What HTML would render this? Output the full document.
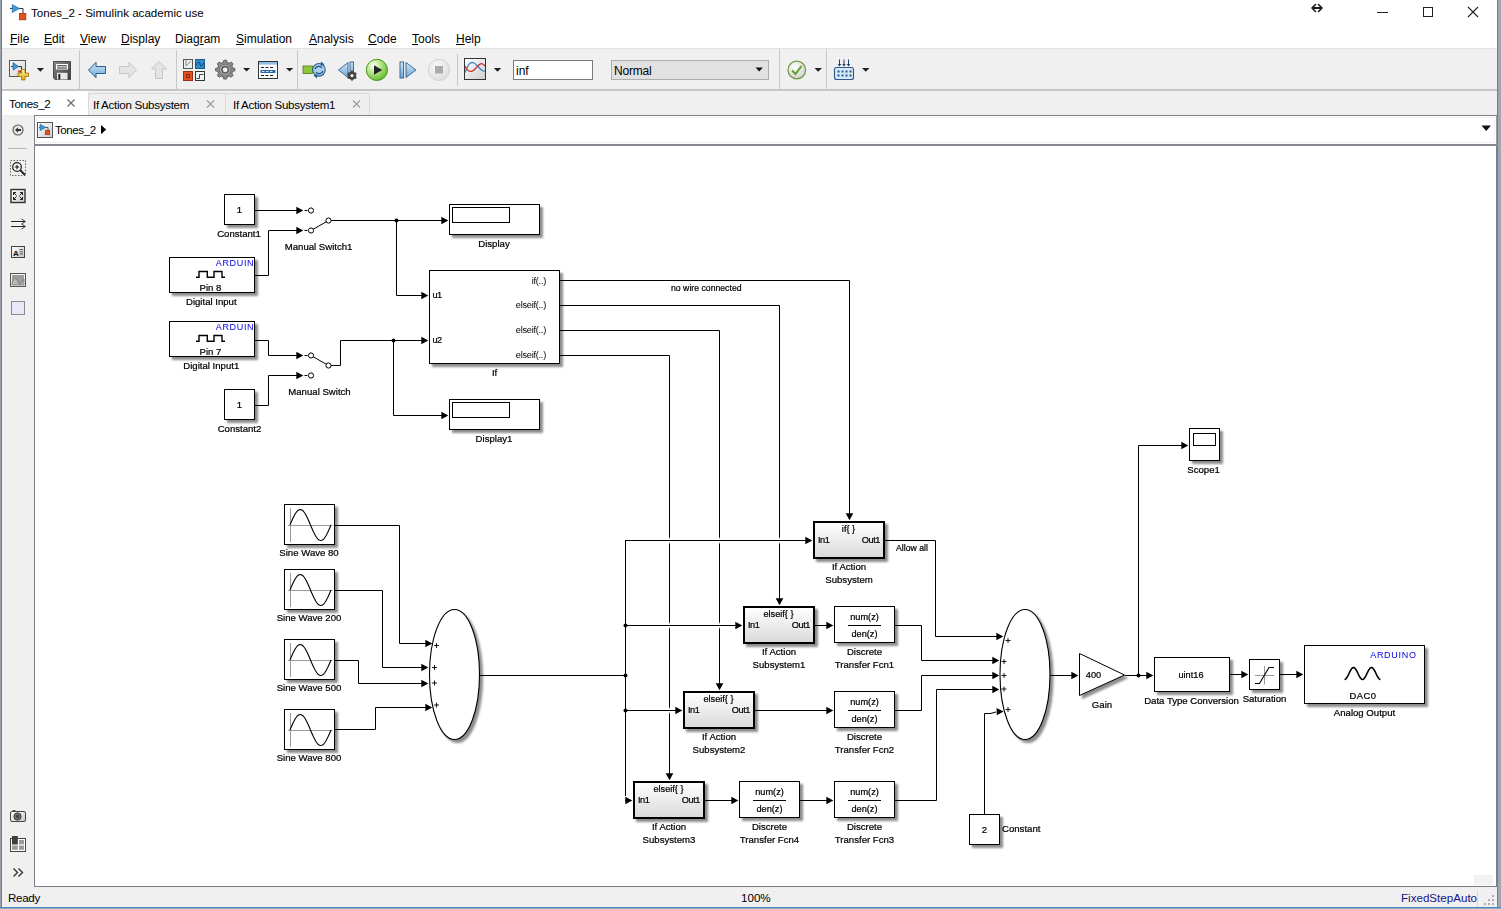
<!DOCTYPE html>
<html><head><meta charset="utf-8">
<style>
*{box-sizing:border-box}
html,body{margin:0;padding:0}
body{width:1501px;height:909px;position:relative;overflow:hidden;background:#fff;font-family:"Liberation Sans",sans-serif;color:#000}
.a{position:absolute}
.ui{font-size:12px;white-space:nowrap;line-height:1}
.menu span{position:absolute;top:33px;font-size:12px;line-height:1}
.menu u{text-decoration:underline;text-underline-offset:1px;text-decoration-thickness:1px}
</style></head><body>
<!-- window border -->
<div class="a" style="left:0;top:0;width:1px;height:909px;background:#9aa0ab"></div>
<div class="a" style="left:1px;top:0;width:1px;height:908px;background:#3c8fc6"></div>
<div class="a" style="left:1497px;top:0;width:1px;height:908px;background:#3c8fc6"></div>
<div class="a" style="left:1498px;top:0;width:3px;height:909px;background:#a0a5b1"></div>
<div class="a" style="left:0;top:907px;width:1501px;height:1px;background:#3c8fc6"></div>
<div class="a" style="left:0;top:908px;width:1501px;height:1px;background:#a0a5b1"></div>

<!-- title -->
<svg class="a" style="left:9px;top:3px" width="18" height="18" viewBox="0 0 18 18">
  <path d="M1 5.5H14V10.5" fill="none" stroke="#333" stroke-width="1"/>
  <path d="M3.2 1.6L10.6 5.5L3.2 9.6Z" fill="#3d9ad6" stroke="#1e5f9a" stroke-width="0.6"/>
  <rect x="10.3" y="10.3" width="6.6" height="6.6" fill="#e0541c" stroke="#8a2b08" stroke-width="0.6"/>
</svg>
<div class="a ui" style="left:31px;top:7px;font-size:11.6px">Tones_2 - Simulink academic use</div>
<!-- window controls -->
<svg class="a" style="left:1310px;top:3px" width="14" height="10"><path d="M3 5H11" stroke="#1a1a1a" stroke-width="2"/><path d="M2 5L5.5 1.5M2 5L5.5 8.5M12 5L8.5 1.5M12 5L8.5 8.5" stroke="#1a1a1a" stroke-width="1.6" stroke-linecap="round"/></svg>
<div class="a" style="left:1377px;top:12px;width:11px;height:1px;background:#222"></div>
<div class="a" style="left:1423px;top:7px;width:10px;height:10px;border:1px solid #222"></div>
<svg class="a" style="left:1467px;top:6px" width="12" height="12"><path d="M1 1L11 11M11 1L1 11" stroke="#222" stroke-width="1.1"/></svg>

<!-- menu -->
<div class="menu">
<span style="left:10px"><u>F</u>ile</span>
<span style="left:44px"><u>E</u>dit</span>
<span style="left:80px"><u>V</u>iew</span>
<span style="left:121px"><u>D</u>isplay</span>
<span style="left:175px">Diag<u>r</u>am</span>
<span style="left:236px"><u>S</u>imulation</span>
<span style="left:309px"><u>A</u>nalysis</span>
<span style="left:368px"><u>C</u>ode</span>
<span style="left:412px"><u>T</u>ools</span>
<span style="left:456px"><u>H</u>elp</span>
</div>

<!-- toolbar -->
<div class="a" style="left:2px;top:48px;width:1495px;height:42px;background:#f0f0f0;border-top:1px solid #e3e3e3;border-bottom:1px solid #c4c4c4"></div>
<!--TB-->
<svg class="a" style="left:0;top:48px" width="900" height="42" viewBox="0 48 900 42">
<defs>
<linearGradient id="pg" x1="0" y1="0" x2="1" y2="1"><stop offset="0" stop-color="#fff"/><stop offset="1" stop-color="#cfcfcf"/></linearGradient>
<linearGradient id="yl" x1="0" y1="0" x2="0" y2="1"><stop offset="0" stop-color="#fff6b0"/><stop offset="1" stop-color="#e0a800"/></linearGradient>
<linearGradient id="bl" x1="0" y1="0" x2="0" y2="1"><stop offset="0" stop-color="#cfe6f7"/><stop offset="1" stop-color="#6fa9d8"/></linearGradient>
<linearGradient id="fl" x1="0" y1="0" x2="1" y2="1"><stop offset="0" stop-color="#8a8a8a"/><stop offset="1" stop-color="#3a3a3a"/></linearGradient>
<radialGradient id="gn" cx="0.35" cy="0.3" r="0.75"><stop offset="0" stop-color="#ffffff"/><stop offset="0.45" stop-color="#b8e68a"/><stop offset="1" stop-color="#5fb82a"/></radialGradient>
<radialGradient id="gy" cx="0.4" cy="0.35" r="0.7"><stop offset="0" stop-color="#fafafa"/><stop offset="1" stop-color="#dcdcdc"/></radialGradient>
<radialGradient id="ck" cx="0.4" cy="0.35" r="0.7"><stop offset="0" stop-color="#ffffff"/><stop offset="1" stop-color="#d0d0d0"/></radialGradient>
<linearGradient id="gear" x1="0" y1="0" x2="0" y2="1"><stop offset="0" stop-color="#9a9a9a"/><stop offset="1" stop-color="#4a4a4a"/></linearGradient>
</defs>
<!-- new model -->
<rect x="9.5" y="60.5" width="16" height="16" fill="url(#pg)" stroke="#555" stroke-width="1"/>
<path d="M11 66.5H21.5V70" fill="none" stroke="#333" stroke-width="1"/>
<path d="M13 62.5L18.5 66.5L13 70.2Z" fill="#3d9ad6" stroke="#1e5f9a" stroke-width="0.7"/>
<rect x="18.2" y="70.5" width="2.8" height="2" fill="#d02a10"/>
<path d="M21.5 69.5h3.5v3.5h3.5v3.5h-3.5v3.5h-3.5v-3.5h-3.5v-3.5h3.5z" fill="url(#yl)" stroke="#a07000" stroke-width="0.8"/>
<path d="M36.8 68H44L40.4 71.8Z" fill="#222"/>
<!-- save -->
<path d="M53.5 61.5H70.5V79.5H55L53.5 78Z" fill="url(#fl)" stroke="#333" stroke-width="0.8"/>
<rect x="56" y="64" width="12" height="5.5" fill="#fff"/>
<path d="M57 65.8H67M57 68H67" stroke="#111" stroke-width="0.9"/>
<rect x="57" y="72.8" width="10.5" height="6.7" fill="#e6e6e6"/>
<rect x="58.3" y="74" width="2" height="5.5" fill="#222"/>
<!-- separators -->
<path d="M79.5 50V90M176.5 50V90M297.5 50V90M457.5 54V86M779.5 49V90M826.5 49V90" stroke="#c8c8c8" stroke-width="1"/>
<!-- back -->
<path d="M88.5 70L96 62.3V66.5H105.5V73.5H96V77.7Z" fill="url(#bl)" stroke="#2b5f8f" stroke-width="1"/>
<!-- fwd / up (disabled) -->
<path d="M136.5 70L129 62.3V66.5H119.5V73.5H129V77.7Z" fill="#e4e4e4" stroke="#c6c6c6" stroke-width="1"/>
<path d="M159 61.5L166.5 69H162.5V78.5H155.5V69H151.5Z" fill="#e4e4e4" stroke="#c6c6c6" stroke-width="1"/>
<!-- library browser -->
<rect x="183.5" y="59.5" width="9" height="9" fill="#e8eef4" stroke="#555" stroke-width="1"/>
<path d="M186 60V66L191 61" fill="none" stroke="#777" stroke-width="0.8"/>
<rect x="195.5" y="59.5" width="9" height="9" fill="#2f8fd0" stroke="#1a5a8a" stroke-width="1"/>
<path d="M196.5 65C198 61 199.5 61 200 64S202 67 203.5 63" fill="none" stroke="#0b2f55" stroke-width="0.9"/>
<rect x="183.5" y="71.5" width="9" height="9" fill="#e0521e" stroke="#9a3010" stroke-width="1"/>
<rect x="186.5" y="74.5" width="3" height="3" fill="none" stroke="#7a2008" stroke-width="0.9"/>
<rect x="195.5" y="71.5" width="9" height="9" fill="#eef2f6" stroke="#333" stroke-width="1"/>
<path d="M196.5 78.5H199.5V74.5H203.5" fill="none" stroke="#333" stroke-width="0.9"/>
<!-- gear -->
<g transform="translate(225.2 69.8)">
<g fill="#8c8c8c" stroke="#3a3a3a" stroke-width="0.8">
<path d="M-1.6 -9.6H1.6L2.2 -7.2L4.6 -6.2L6.8 -7.6L9 -5.4L7.6 -3.2L8.6 -0.8L11 -0.2V2.4L8.6 3L7.6 5.4L9 7.6L6.8 9.8L4.6 8.4L2.2 9.4L1.6 11.8H-1.6L-2.2 9.4L-4.6 8.4L-6.8 9.8L-9 7.6L-7.6 5.4L-8.6 3L-11 2.4V-0.2L-8.6 -0.8L-7.6 -3.2L-9 -5.4L-6.8 -7.6L-4.6 -6.2L-2.2 -7.2Z" transform="translate(0 -1.1) scale(0.88)"/>
</g>
<circle r="5.6" fill="#b4b4b4" stroke="#5a5a5a" stroke-width="0.7"/>
<circle r="4" fill="#5e5e5e"/>
<circle r="2.4" fill="#f2f2f2"/>
</g>
<path d="M243 68H250.2L246.6 71.6Z" fill="#222"/>
<!-- model explorer -->
<rect x="258.5" y="61.5" width="19" height="17" fill="#fff" stroke="#333" stroke-width="1"/>
<rect x="259" y="62" width="18" height="2.6" fill="#8fbde3"/>
<path d="M261 67.5h3M265.5 67.5h3M270 67.5h3M261 75.5h3M265.5 75.5h3M270 75.5h3" stroke="#222" stroke-width="1"/>
<rect x="260.5" y="70" width="15" height="3" fill="#2c64a8"/>
<path d="M262 71.5h2.5M266 71.5h2.5M270 71.5h2.5" stroke="#cfe4f7" stroke-width="1"/>
<path d="M286 68H293.2L289.6 71.6Z" fill="#222"/>
<!-- connect -->
<rect x="303" y="66" width="9.5" height="7.5" fill="#8cc63e" stroke="#4a7a1a" stroke-width="0.8"/>
<circle cx="319" cy="69.8" r="6.3" fill="#a9cdea" stroke="#2b5f8f" stroke-width="1.1"/>
<path d="M315 69C316 66 320 65.5 322 68M323 71C322 74 318 74.5 316 72" fill="none" stroke="#1d4f80" stroke-width="1.2"/>
<path d="M321 61.5L324.5 64.5L320.5 66Z M317 78.5L313.5 75.5L317.5 74Z" fill="#2b5f8f"/>
<!-- step back -->
<path d="M348 62.5V77.5L338.5 70Z" fill="url(#bl)" stroke="#2b5f8f" stroke-width="0.9"/>
<rect x="350" y="62" width="3.5" height="13" fill="url(#bl)" stroke="#2b5f8f" stroke-width="0.9"/>
<g transform="translate(352 75.6)"><circle r="4.2" fill="#444"/><g fill="#444"><rect x="-0.9" y="-5" width="1.8" height="10"/><rect x="-0.9" y="-5" width="1.8" height="10" transform="rotate(60)"/><rect x="-0.9" y="-5" width="1.8" height="10" transform="rotate(120)"/></g><circle r="1.6" fill="#eee"/></g>
<!-- play -->
<circle cx="376.9" cy="69.9" r="10.6" fill="url(#gn)" stroke="#4a9a20" stroke-width="1"/>
<path d="M374 65.3V74.7L382.2 70Z" fill="#222"/>
<!-- step fwd -->
<rect x="400" y="62" width="3.6" height="16" fill="url(#bl)" stroke="#2b5f8f" stroke-width="0.9"/>
<path d="M406 62.5V77.5L416 70Z" fill="url(#bl)" stroke="#2b5f8f" stroke-width="0.9"/>
<!-- stop -->
<circle cx="439" cy="69.9" r="10.7" fill="url(#gy)" stroke="#d4d4d4" stroke-width="1"/>
<rect x="435" y="66" width="8" height="7.6" fill="#ababab"/>
<!-- scope graph -->
<rect x="464.5" y="58.5" width="21" height="21" fill="url(#pg)" stroke="#333" stroke-width="1"/>
<path d="M465 72.5C468 65 470 61 474 63S481 72 485 71" fill="none" stroke="#3a86c8" stroke-width="1.3"/>
<path d="M465 66C467 71 470 73 474 70S480 60 485 66" fill="none" stroke="#c0302a" stroke-width="1.3"/>
<path d="M493.8 68H501.2L497.5 71.8Z" fill="#222"/>
<!-- check -->
<circle cx="796.8" cy="70" r="8.8" fill="url(#ck)" stroke="#6a9a3a" stroke-width="1.2"/>
<path d="M792 70.5L795.5 74L801.5 66" fill="none" stroke="#5aa02a" stroke-width="2"/>
<path d="M814.5 68H822L818.2 71.8Z" fill="#222"/>
<!-- grid -->
<rect x="834.5" y="67.5" width="19" height="12" rx="2" fill="#d8e9f8" stroke="#2c5a8e" stroke-width="1.1"/>
<g fill="#2c5a8e"><rect x="837.5" y="70.5" width="2" height="2"/><rect x="841.5" y="70.5" width="2" height="2"/><rect x="845.5" y="70.5" width="2" height="2"/><rect x="849.5" y="70.5" width="2" height="2"/><rect x="837.5" y="74.5" width="2" height="2"/><rect x="841.5" y="74.5" width="2" height="2"/><rect x="845.5" y="74.5" width="2" height="2"/><rect x="849.5" y="74.5" width="2" height="2"/></g>
<path d="M839.5 59.5V65M844 59.5V65M848.5 59.5V65" stroke="#1d3f6a" stroke-width="1"/>
<path d="M837.7 64H841.3L839.5 66.5ZM842.2 64H845.8L844 66.5ZM846.7 64H850.3L848.5 66.5Z" fill="#1d3f6a"/>
<path d="M862 68H869.5L865.8 71.8Z" fill="#222"/>
</svg>
<div class="a" style="left:513px;top:60px;width:80px;height:20px;background:#fff;border:1px solid #7a7a7a"></div>
<div class="a ui" style="left:516px;top:65px;font-size:12px">inf</div>
<div class="a" style="left:611px;top:60px;width:158px;height:20px;background:#e1e1e1;border:1px solid #adadad"></div>
<div class="a ui" style="left:614px;top:65px;font-size:12px;letter-spacing:-0.2px">Normal</div>
<svg class="a" style="left:755px;top:67px" width="9" height="6"><path d="M0.5 0.5H8L4.2 4.5Z" fill="#111"/></svg>
<!--/TB-->

<!--CH2-->
<!-- tab bar -->
<div class="a" style="left:2px;top:90px;width:1495px;height:25px;background:#f0f0f0;border-top:1px solid #c8c8c8"></div>
<div class="a" style="left:2px;top:91px;width:86px;height:24px;background:#fff"></div>
<div class="a" style="left:88px;top:93px;width:138px;height:22px;background:#efefef;border-top:1px solid #dadada;border-left:1px solid #dadada;border-right:1px solid #dadada"></div>
<div class="a" style="left:226px;top:93px;width:144px;height:22px;background:#efefef;border-top:1px solid #dadada;border-right:1px solid #dadada"></div>
<div class="a ui" style="left:9px;top:98px;font-size:11.6px;letter-spacing:-0.35px">Tones_2</div>
<div class="a ui" style="left:93px;top:99px;font-size:11.6px;letter-spacing:-0.3px">If Action Subsystem</div>
<div class="a ui" style="left:233px;top:99px;font-size:11.6px;letter-spacing:-0.3px">If Action Subsystem1</div>
<svg class="a" style="left:0;top:90px" width="380" height="25" viewBox="0 90 380 25">
<path d="M67.5 99.5L74.5 106.5M74.5 99.5L67.5 106.5" stroke="#6a6a6a" stroke-width="1.2"/>
<path d="M207 100.5L214 107.5M214 100.5L207 107.5" stroke="#9a9a9a" stroke-width="1.1"/>
<path d="M353 100.5L360 107.5M360 100.5L353 107.5" stroke="#9a9a9a" stroke-width="1.1"/>
</svg>

<!-- left palette -->
<div class="a" style="left:2px;top:115px;width:32px;height:772px;background:#f0f0f0"></div>
<svg class="a" style="left:0;top:115px" width="34" height="772" viewBox="0 115 34 772">
<defs><linearGradient id="pl" x1="0" y1="0" x2="1" y2="1"><stop offset="0" stop-color="#fff"/><stop offset="1" stop-color="#c8c8c8"/></linearGradient></defs>
<circle cx="18" cy="130" r="5" fill="#e8e8e8" stroke="#555" stroke-width="1.1"/>
<path d="M15 130L18 127.3V129H21V131H18V132.7Z" fill="#333"/>
<path d="M8 148.5H27" stroke="#b8b8b8" stroke-width="1"/>
<rect x="10.5" y="160.5" width="15" height="15" fill="none" stroke="#666" stroke-width="1" stroke-dasharray="1.5 1.5"/>
<circle cx="17" cy="167" r="4.3" fill="#fff" stroke="#222" stroke-width="1.3"/>
<path d="M14.8 167H19.2M17 164.8V169.2" stroke="#111" stroke-width="1.1"/>
<path d="M20 170L25 175" stroke="#222" stroke-width="1.8"/>
<rect x="11" y="189.5" width="14" height="13" fill="url(#pl)" stroke="#333" stroke-width="1.4"/>
<path d="M13.5 192.5L16.5 195.5M13.5 192.5V195M13.5 192.5H16M22.5 192.5L19.5 195.5M22.5 192.5V195M22.5 192.5H20M13.5 199.5L16.5 196.5M13.5 199.5V197M13.5 199.5H16M22.5 199.5L19.5 196.5M22.5 199.5V197M22.5 199.5H20" stroke="#222" stroke-width="1" fill="none"/>
<path d="M11 221.5H25M11 226.5H25" stroke="#222" stroke-width="1"/>
<path d="M21.5 219L25.5 221.5L21.5 224M21.5 224L25.5 226.5L21.5 229" fill="none" stroke="#444" stroke-width="1"/>
<rect x="11.5" y="246.5" width="13" height="11" fill="url(#pl)" stroke="#444" stroke-width="1"/>
<text x="13" y="255.5" font-size="8" font-weight="bold" font-family="Liberation Sans" fill="#111">A</text>
<path d="M19.5 249.5H23M19.5 251.8H23M19.5 254H23" stroke="#333" stroke-width="0.8"/>
<rect x="10.5" y="273.5" width="15" height="13" fill="#f4f4f4" stroke="#555" stroke-width="1"/>
<rect x="12" y="275" width="12" height="10" fill="#9c9c9c"/>
<path d="M12 283C14 277 16 277 18 282S22 282 24 279V285H12Z" fill="#b9b9b9" stroke="#6a6a6a" stroke-width="0.7"/>
<rect x="11.5" y="301.5" width="13" height="13" fill="#e8e8f8" stroke="#8a8a8a" stroke-width="1"/>
<!-- camera -->
<rect x="10.5" y="811.5" width="15" height="10" rx="1.5" fill="url(#pl)" stroke="#444" stroke-width="1"/>
<rect x="12.5" y="810" width="3" height="1.5" fill="#555"/>
<circle cx="17.5" cy="816.5" r="3.6" fill="#777" stroke="#333" stroke-width="1"/>
<circle cx="17.5" cy="816.5" r="1.8" fill="#444"/>
<!-- layout -->
<rect x="10.5" y="838.5" width="15" height="13" fill="#fff" stroke="#444" stroke-width="1"/>
<rect x="12" y="836" width="5.8" height="8.5" fill="#3e3e3e"/>
<rect x="19" y="840" width="5" height="4.3" fill="#9a9a9a"/>
<rect x="12" y="845.5" width="5.8" height="4.3" fill="#9a9a9a"/>
<rect x="19" y="845.5" width="5" height="4.3" fill="#9a9a9a"/>
<path d="M13.5 868.5L17.5 872.5L13.5 876.5M18.5 868.5L22.5 872.5L18.5 876.5" fill="none" stroke="#333" stroke-width="1.4"/>
</svg>

<!-- breadcrumb -->
<div class="a" style="left:34px;top:115px;width:1463px;height:31px;background:#fff;border-top:1px solid #7d8088;border-bottom:2px solid #858890;border-left:1px solid #7d8088;border-right:1px solid #9a9ca2"></div>
<div class="a" style="left:36px;top:117px;width:1459px;height:26px;border:1px solid #f0f0f0"></div>
<svg class="a" style="left:34px;top:115px" width="80" height="30" viewBox="34 115 80 30">
<defs><linearGradient id="bc" x1="0" y1="0" x2="1" y2="1"><stop offset="0" stop-color="#fff"/><stop offset="1" stop-color="#cfcfcf"/></linearGradient></defs>
<rect x="37.5" y="122.5" width="15" height="15" fill="url(#bc)" stroke="#555" stroke-width="1"/>
<path d="M39 127.5H48V131" fill="none" stroke="#333" stroke-width="0.8"/>
<path d="M40 124.2L46 127.4L40 130.6Z" fill="#3d9ad6" stroke="#1e5f9a" stroke-width="0.6"/>
<rect x="45.2" y="130.2" width="4.6" height="4.6" fill="#e0541c" stroke="#8a2b08" stroke-width="0.5"/>
<path d="M101 125V134.2L106.2 129.6Z" fill="#000"/>
</svg>
<div class="a ui" style="left:55px;top:124px;font-size:11.6px;letter-spacing:-0.45px">Tones_2</div>
<svg class="a" style="left:1481px;top:125px" width="11" height="7"><path d="M0.5 0.5H10L5.2 6Z" fill="#111"/></svg>

<!-- canvas -->
<div class="a" style="left:34px;top:146px;width:1463px;height:741px;background:#fff;border-left:1px solid #7a7e87;border-right:1px solid #7a7e87;border-bottom:1px solid #7a7e87"></div>
<div class="a" style="left:1474px;top:875px;width:19px;height:10px;background:#f2f2f2"></div>

<!-- status bar -->
<div class="a" style="left:2px;top:887px;width:1495px;height:20px;background:#f0f0f0"></div>
<div class="a ui" style="left:8px;top:892px;font-size:11.6px;letter-spacing:-0.3px">Ready</div>
<div class="a ui" style="left:741px;top:892px;font-size:11.6px">100%</div>
<div class="a ui" style="left:1401px;top:892px;font-size:11.6px;color:#14148a">FixedStepAuto</div>
<div class="a" style="left:1477px;top:890px;width:1px;height:17px;background:#d8d8d8"></div>
<svg class="a" style="left:1484px;top:895px" width="12" height="12"><g fill="#b0b0b0"><rect x="8" y="8" width="2" height="2"/><rect x="4" y="8" width="2" height="2"/><rect x="8" y="4" width="2" height="2"/><rect x="0" y="8" width="2" height="2"/><rect x="4" y="4" width="2" height="2"/><rect x="8" y="0" width="2" height="2"/></g></svg>
<!--/CH2-->
<svg id="dg" class="a" style="left:0;top:0;will-change:transform" width="1501" height="909">
<defs>
<filter id="sh" x="-20%" y="-20%" width="150%" height="160%"><feGaussianBlur in="SourceAlpha" stdDeviation="1.3"/><feOffset dx="2.5" dy="3" result="o"/><feComponentTransfer><feFuncA type="linear" slope="0.45"/></feComponentTransfer><feMerge><feMergeNode/><feMergeNode in="SourceGraphic"/></feMerge></filter>
<linearGradient id="gr" x1="0" y1="0" x2="0" y2="1"><stop offset="0" stop-color="#ffffff"/><stop offset="1" stop-color="#d9d9d9"/></linearGradient>
</defs>
<g font-family="Liberation Sans, sans-serif" stroke-width="0">
<rect x="224.5" y="194.5" width="30" height="30" fill="#fff" stroke="#000" stroke-width="1" filter="url(#sh)" />
<text x="239.5" y="213" font-size="9.6" text-anchor="middle" fill="#000" stroke="#000" stroke-width="0.22" >1</text>
<text x="239" y="236.5" font-size="9.6" text-anchor="middle" fill="#000" stroke="#000" stroke-width="0.22" >Constant1</text>
<rect x="169.5" y="257.5" width="85" height="35" fill="#fff" stroke="#000" stroke-width="1" filter="url(#sh)" />
<text x="254.2" y="265.8" font-size="9" text-anchor="end" fill="#0000e0" stroke="#0000e0" stroke-width="0" letter-spacing="0.65">ARDUIN</text>
<path d="M196 277.3H199V271.5H207.3V277.3H214V271.5H222V277.3H225" fill="none" stroke="#000" stroke-width="1.4"/>
<text x="210.5" y="290.7" font-size="9.6" text-anchor="middle" fill="#000" stroke="#000" stroke-width="0.22" >Pin 8</text>
<text x="211.3" y="304.5" font-size="9.6" text-anchor="middle" fill="#000" stroke="#000" stroke-width="0.22" >Digital Input</text>
<rect x="169.5" y="321.5" width="85" height="35" fill="#fff" stroke="#000" stroke-width="1" filter="url(#sh)" />
<text x="254.2" y="329.8" font-size="9" text-anchor="end" fill="#0000e0" stroke="#0000e0" stroke-width="0" letter-spacing="0.65">ARDUIN</text>
<path d="M196 341.3H199V335.5H207.3V341.3H214V335.5H222V341.3H225" fill="none" stroke="#000" stroke-width="1.4"/>
<text x="210.5" y="354.7" font-size="9.6" text-anchor="middle" fill="#000" stroke="#000" stroke-width="0.22" >Pin 7</text>
<text x="211.3" y="368.5" font-size="9.6" text-anchor="middle" fill="#000" stroke="#000" stroke-width="0.22" >Digital Input1</text>
<rect x="224.5" y="389.5" width="30" height="30" fill="#fff" stroke="#000" stroke-width="1" filter="url(#sh)" />
<text x="239.5" y="408" font-size="9.6" text-anchor="middle" fill="#000" stroke="#000" stroke-width="0.22" >1</text>
<text x="239.5" y="431.6" font-size="9.6" text-anchor="middle" fill="#000" stroke="#000" stroke-width="0.22" >Constant2</text>
<path d="M304.5 210.5H307.5" stroke="#000" stroke-width="1"/>
<circle cx="311" cy="210.5" r="2.6" fill="#fff" stroke="#000" stroke-width="1"/>
<path d="M304.5 230.5H307.5" stroke="#000" stroke-width="1"/>
<circle cx="311" cy="230.5" r="2.6" fill="#fff" stroke="#000" stroke-width="1"/>
<circle cx="328.5" cy="220.5" r="2.6" fill="#fff" stroke="#000" stroke-width="1"/>
<path d="M313.26 229.21L326.24 221.79" stroke="#000" stroke-width="1"/>
<text x="318.6" y="249.6" font-size="9.6" text-anchor="middle" fill="#000" stroke="#000" stroke-width="0.22" >Manual Switch1</text>
<path d="M304.5 355.5H307.5" stroke="#000" stroke-width="1"/>
<circle cx="311" cy="355.5" r="2.6" fill="#fff" stroke="#000" stroke-width="1"/>
<path d="M304.5 375.5H307.5" stroke="#000" stroke-width="1"/>
<circle cx="311" cy="375.5" r="2.6" fill="#fff" stroke="#000" stroke-width="1"/>
<circle cx="328.5" cy="365.5" r="2.6" fill="#fff" stroke="#000" stroke-width="1"/>
<path d="M313.26 356.79L326.24 364.21" stroke="#000" stroke-width="1"/>
<text x="319.5" y="394.7" font-size="9.6" text-anchor="middle" fill="#000" stroke="#000" stroke-width="0.22" >Manual Switch</text>
<path d="M255.5 210.5 L298.5 210.5" fill="none" stroke="#000" stroke-width="1" stroke-linecap="square"/>
<path d="M303.3 210.5L296.3 206.7L296.3 214.3Z" fill="#000"/>
<path d="M255.5 275.5 L268.5 275.5 L268.5 230.5 L298.5 230.5" fill="none" stroke="#000" stroke-width="1" stroke-linecap="square"/>
<path d="M303.3 230.5L296.3 226.7L296.3 234.3Z" fill="#000"/>
<path d="M331.5 220.5 L396.5 220.5" fill="none" stroke="#000" stroke-width="1" stroke-linecap="square"/>
<path d="M396.5 220.5 L443.5 220.5" fill="none" stroke="#000" stroke-width="1" stroke-linecap="square"/>
<path d="M448.3 220.5L441.3 216.7L441.3 224.3Z" fill="#000"/>
<path d="M396.5 220.5 L396.5 295.5 L423.5 295.5" fill="none" stroke="#000" stroke-width="1" stroke-linecap="square"/>
<path d="M428.3 295.5L421.3 291.7L421.3 299.3Z" fill="#000"/>
<circle cx="396.5" cy="220.5" r="2" fill="#000"/>
<path d="M255.5 340.5 L268.5 340.5 L268.5 355.5 L298.5 355.5" fill="none" stroke="#000" stroke-width="1" stroke-linecap="square"/>
<path d="M303.3 355.5L296.3 351.7L296.3 359.3Z" fill="#000"/>
<path d="M255.5 405.5 L268.5 405.5 L268.5 375.5 L298.5 375.5" fill="none" stroke="#000" stroke-width="1" stroke-linecap="square"/>
<path d="M303.3 375.5L296.3 371.7L296.3 379.3Z" fill="#000"/>
<path d="M331.5 365.5 L340.5 365.5 L340.5 340.5 L393.5 340.5" fill="none" stroke="#000" stroke-width="1" stroke-linecap="square"/>
<path d="M393.5 340.5 L423.5 340.5" fill="none" stroke="#000" stroke-width="1" stroke-linecap="square"/>
<path d="M428.3 340.5L421.3 336.7L421.3 344.3Z" fill="#000"/>
<path d="M393.5 340.5 L393.5 415.5 L443.5 415.5" fill="none" stroke="#000" stroke-width="1" stroke-linecap="square"/>
<path d="M448.3 415.5L441.3 411.7L441.3 419.3Z" fill="#000"/>
<circle cx="393.5" cy="340.5" r="2" fill="#000"/>
<rect x="449.5" y="204.5" width="90" height="30" fill="#fff" stroke="#000" stroke-width="1" filter="url(#sh)" />
<rect x="452.5" y="207.5" width="57" height="15" fill="none" stroke="#000" stroke-width="1"/>
<text x="494" y="247" font-size="9.6" text-anchor="middle" fill="#000" stroke="#000" stroke-width="0.22" >Display</text>
<rect x="449.5" y="399.5" width="90" height="30" fill="#fff" stroke="#000" stroke-width="1" filter="url(#sh)" />
<rect x="452.5" y="402.5" width="57" height="15" fill="none" stroke="#000" stroke-width="1"/>
<text x="494" y="442" font-size="9.6" text-anchor="middle" fill="#000" stroke="#000" stroke-width="0.22" >Display1</text>
<rect x="429.5" y="270.5" width="130" height="93" fill="#fff" stroke="#000" stroke-width="1" filter="url(#sh)" />
<text x="432.5" y="297.8" font-size="9.2" text-anchor="start" fill="#000" stroke="#000" stroke-width="0.22" letter-spacing="-0.6">u1</text>
<text x="432.5" y="342.8" font-size="9.2" text-anchor="start" fill="#000" stroke="#000" stroke-width="0.22" letter-spacing="-0.6">u2</text>
<text x="546" y="283.6" font-size="9.2" text-anchor="end" fill="#000" stroke="#000" stroke-width="0" letter-spacing="-0.25">if(..)</text>
<text x="546" y="308.1" font-size="9.2" text-anchor="end" fill="#000" stroke="#000" stroke-width="0" letter-spacing="-0.25">elseif(..)</text>
<text x="546" y="333.1" font-size="9.2" text-anchor="end" fill="#000" stroke="#000" stroke-width="0" letter-spacing="-0.25">elseif(..)</text>
<text x="546" y="358.1" font-size="9.2" text-anchor="end" fill="#000" stroke="#000" stroke-width="0" letter-spacing="-0.25">elseif(..)</text>
<text x="494.6" y="375.5" font-size="9.6" text-anchor="middle" fill="#000" stroke="#000" stroke-width="0.22" >If</text>
<path d="M560.5 280.5 L849.5 280.5 L849.5 515.5" fill="none" stroke="#000" stroke-width="1" stroke-linecap="square"/>
<path d="M849.5 520.3L845.7 513.3L853.3 513.3Z" fill="#000"/>
<path d="M560.5 305.5 L779.5 305.5 L779.5 600.5" fill="none" stroke="#000" stroke-width="1" stroke-linecap="square"/>
<path d="M779.5 605.3L775.7 598.3L783.3 598.3Z" fill="#000"/>
<path d="M560.5 330.5 L719.5 330.5 L719.5 685.5" fill="none" stroke="#000" stroke-width="1" stroke-linecap="square"/>
<path d="M719.5 690.3L715.7 683.3L723.3 683.3Z" fill="#000"/>
<path d="M560.5 355.5 L669.5 355.5 L669.5 775.5" fill="none" stroke="#000" stroke-width="1" stroke-linecap="square"/>
<path d="M669.5 780.3L665.7 773.3L673.3 773.3Z" fill="#000"/>
<text x="706.3" y="290.8" font-size="8.7" text-anchor="middle" fill="#000" stroke="#000" stroke-width="0.22" >no wire connected</text>
<rect x="284.5" y="504.5" width="50" height="40" fill="#fff" stroke="#000" stroke-width="1" filter="url(#sh)" />
<path d="M288 525.5H332.5M290.5 508V542" stroke="#9a9a9a" stroke-width="1"/>
<path d="M290.00 525.00 L291.02 522.58 L292.05 520.21 L293.07 517.96 L294.10 515.89 L295.12 514.04 L296.15 512.46 L297.18 511.19 L298.20 510.26 L299.23 509.69 L300.25 509.50 L301.27 509.69 L302.30 510.26 L303.32 511.19 L304.35 512.46 L305.38 514.04 L306.40 515.89 L307.43 517.96 L308.45 520.21 L309.48 522.58 L310.50 525.00 L311.52 527.42 L312.55 529.79 L313.57 532.04 L314.60 534.11 L315.62 535.96 L316.65 537.54 L317.68 538.81 L318.70 539.74 L319.73 540.31 L320.75 540.50 L321.77 540.31 L322.80 539.74 L323.82 538.81 L324.85 537.54 L325.88 535.96 L326.90 534.11 L327.93 532.04 L328.95 529.79 L329.98 527.42 L331.00 525.00" fill="none" stroke="#000" stroke-width="1.1"/>
<text x="309" y="556" font-size="9.6" text-anchor="middle" fill="#000" stroke="#000" stroke-width="0.22" >Sine Wave 80</text>
<rect x="284.5" y="569.5" width="50" height="40" fill="#fff" stroke="#000" stroke-width="1" filter="url(#sh)" />
<path d="M288 590.5H332.5M290.5 573V607" stroke="#9a9a9a" stroke-width="1"/>
<path d="M290.00 590.00 L291.02 587.58 L292.05 585.21 L293.07 582.96 L294.10 580.89 L295.12 579.04 L296.15 577.46 L297.18 576.19 L298.20 575.26 L299.23 574.69 L300.25 574.50 L301.27 574.69 L302.30 575.26 L303.32 576.19 L304.35 577.46 L305.38 579.04 L306.40 580.89 L307.43 582.96 L308.45 585.21 L309.48 587.58 L310.50 590.00 L311.52 592.42 L312.55 594.79 L313.57 597.04 L314.60 599.11 L315.62 600.96 L316.65 602.54 L317.68 603.81 L318.70 604.74 L319.73 605.31 L320.75 605.50 L321.77 605.31 L322.80 604.74 L323.82 603.81 L324.85 602.54 L325.88 600.96 L326.90 599.11 L327.93 597.04 L328.95 594.79 L329.98 592.42 L331.00 590.00" fill="none" stroke="#000" stroke-width="1.1"/>
<text x="309" y="621" font-size="9.6" text-anchor="middle" fill="#000" stroke="#000" stroke-width="0.22" >Sine Wave 200</text>
<rect x="284.5" y="639.5" width="50" height="40" fill="#fff" stroke="#000" stroke-width="1" filter="url(#sh)" />
<path d="M288 660.5H332.5M290.5 643V677" stroke="#9a9a9a" stroke-width="1"/>
<path d="M290.00 660.00 L291.02 657.58 L292.05 655.21 L293.07 652.96 L294.10 650.89 L295.12 649.04 L296.15 647.46 L297.18 646.19 L298.20 645.26 L299.23 644.69 L300.25 644.50 L301.27 644.69 L302.30 645.26 L303.32 646.19 L304.35 647.46 L305.38 649.04 L306.40 650.89 L307.43 652.96 L308.45 655.21 L309.48 657.58 L310.50 660.00 L311.52 662.42 L312.55 664.79 L313.57 667.04 L314.60 669.11 L315.62 670.96 L316.65 672.54 L317.68 673.81 L318.70 674.74 L319.73 675.31 L320.75 675.50 L321.77 675.31 L322.80 674.74 L323.82 673.81 L324.85 672.54 L325.88 670.96 L326.90 669.11 L327.93 667.04 L328.95 664.79 L329.98 662.42 L331.00 660.00" fill="none" stroke="#000" stroke-width="1.1"/>
<text x="309" y="691" font-size="9.6" text-anchor="middle" fill="#000" stroke="#000" stroke-width="0.22" >Sine Wave 500</text>
<rect x="284.5" y="709.5" width="50" height="40" fill="#fff" stroke="#000" stroke-width="1" filter="url(#sh)" />
<path d="M288 730.5H332.5M290.5 713V747" stroke="#9a9a9a" stroke-width="1"/>
<path d="M290.00 730.00 L291.02 727.58 L292.05 725.21 L293.07 722.96 L294.10 720.89 L295.12 719.04 L296.15 717.46 L297.18 716.19 L298.20 715.26 L299.23 714.69 L300.25 714.50 L301.27 714.69 L302.30 715.26 L303.32 716.19 L304.35 717.46 L305.38 719.04 L306.40 720.89 L307.43 722.96 L308.45 725.21 L309.48 727.58 L310.50 730.00 L311.52 732.42 L312.55 734.79 L313.57 737.04 L314.60 739.11 L315.62 740.96 L316.65 742.54 L317.68 743.81 L318.70 744.74 L319.73 745.31 L320.75 745.50 L321.77 745.31 L322.80 744.74 L323.82 743.81 L324.85 742.54 L325.88 740.96 L326.90 739.11 L327.93 737.04 L328.95 734.79 L329.98 732.42 L331.00 730.00" fill="none" stroke="#000" stroke-width="1.1"/>
<text x="309" y="761" font-size="9.6" text-anchor="middle" fill="#000" stroke="#000" stroke-width="0.22" >Sine Wave 800</text>
<path d="M335.5 525.5 L399.5 525.5 L399.5 643.5 L427.5 643.5" fill="none" stroke="#000" stroke-width="1" stroke-linecap="square"/>
<path d="M432.3 643.5L425.3 639.7L425.3 647.3Z" fill="#000"/>
<path d="M335.5 590.5 L382.5 590.5 L382.5 667.5 L423.5 667.5" fill="none" stroke="#000" stroke-width="1" stroke-linecap="square"/>
<path d="M428.3 667.5L421.3 663.7L421.3 671.3Z" fill="#000"/>
<path d="M335.5 660.5 L358.5 660.5 L358.5 683.5 L423.5 683.5" fill="none" stroke="#000" stroke-width="1" stroke-linecap="square"/>
<path d="M428.3 683.5L421.3 679.7L421.3 687.3Z" fill="#000"/>
<path d="M335.5 729.5 L375.5 729.5 L375.5 707.5 L427.5 707.5" fill="none" stroke="#000" stroke-width="1" stroke-linecap="square"/>
<path d="M432.3 707.5L425.3 703.7L425.3 711.3Z" fill="#000"/>
<ellipse cx="454.5" cy="674.5" rx="25" ry="65" fill="#fff" stroke="#000" stroke-width="1.1" filter="url(#sh)"/>
<path d="M434.0 645.5H439.0M436.5 643.0V648.0" stroke="#000" stroke-width="0.9"/>
<path d="M432.0 667.5H437.0M434.5 665.0V670.0" stroke="#000" stroke-width="0.9"/>
<path d="M432.0 683H437.0M434.5 680.5V685.5" stroke="#000" stroke-width="0.9"/>
<path d="M434.0 705H439.0M436.5 702.5V707.5" stroke="#000" stroke-width="0.9"/>
<path d="M480.5 675.5 L625.5 675.5" fill="none" stroke="#000" stroke-width="1" stroke-linecap="square"/>
<path d="M625.5 540.5 L625.5 795.5" fill="none" stroke="#000" stroke-width="1" stroke-linecap="square"/>
<circle cx="625.5" cy="675.5" r="2" fill="#000"/>
<path d="M625.5 540.5 L807.5 540.5" fill="none" stroke="#000" stroke-width="1" stroke-linecap="square"/>
<path d="M812.3 540.5L805.3 536.7L805.3 544.3Z" fill="#000"/>
<path d="M625.5 625.5 L737.5 625.5" fill="none" stroke="#000" stroke-width="1" stroke-linecap="square"/>
<path d="M742.3 625.5L735.3 621.7L735.3 629.3Z" fill="#000"/>
<circle cx="625.5" cy="625.5" r="2" fill="#000"/>
<path d="M625.5 710.5 L677.5 710.5" fill="none" stroke="#000" stroke-width="1" stroke-linecap="square"/>
<path d="M682.3 710.5L675.3 706.7L675.3 714.3Z" fill="#000"/>
<circle cx="625.5" cy="710.5" r="2" fill="#000"/>
<path d="M625.5 800.5 L627.5 800.5" fill="none" stroke="#000" stroke-width="1" stroke-linecap="square"/>
<path d="M632.3 800.5L625.3 796.7L625.3 804.3Z" fill="#000"/>
<rect x="814" y="522" width="70" height="36" fill="url(#gr)" stroke="#000" stroke-width="2" filter="url(#sh)" />
<text x="848.5" y="532" font-size="9.2" text-anchor="middle" fill="#000" stroke="#000" stroke-width="0.22" >if{ }</text>
<text x="818" y="542.5" font-size="9.2" text-anchor="start" fill="#000" stroke="#000" stroke-width="0.22" letter-spacing="-0.5">In1</text>
<text x="880" y="542.5" font-size="9.2" text-anchor="end" fill="#000" stroke="#000" stroke-width="0.22" letter-spacing="-0.4">Out1</text>
<text x="849" y="569.8" font-size="9.6" text-anchor="middle" fill="#000" stroke="#000" stroke-width="0.22" >If Action</text>
<text x="849" y="582.9" font-size="9.6" text-anchor="middle" fill="#000" stroke="#000" stroke-width="0.22" >Subsystem</text>
<text x="912" y="550.8" font-size="8.7" text-anchor="middle" fill="#000" stroke="#000" stroke-width="0.22" >Allow all</text>
<rect x="744" y="607" width="70" height="36" fill="url(#gr)" stroke="#000" stroke-width="2" filter="url(#sh)" />
<text x="778.5" y="617" font-size="9.2" text-anchor="middle" fill="#000" stroke="#000" stroke-width="0.22" >elseif{ }</text>
<text x="748" y="627.5" font-size="9.2" text-anchor="start" fill="#000" stroke="#000" stroke-width="0.22" letter-spacing="-0.5">In1</text>
<text x="810" y="627.5" font-size="9.2" text-anchor="end" fill="#000" stroke="#000" stroke-width="0.22" letter-spacing="-0.4">Out1</text>
<text x="779" y="654.8" font-size="9.6" text-anchor="middle" fill="#000" stroke="#000" stroke-width="0.22" >If Action</text>
<text x="779" y="667.9" font-size="9.6" text-anchor="middle" fill="#000" stroke="#000" stroke-width="0.22" >Subsystem1</text>
<rect x="684" y="692" width="70" height="36" fill="url(#gr)" stroke="#000" stroke-width="2" filter="url(#sh)" />
<text x="718.5" y="702" font-size="9.2" text-anchor="middle" fill="#000" stroke="#000" stroke-width="0.22" >elseif{ }</text>
<text x="688" y="712.5" font-size="9.2" text-anchor="start" fill="#000" stroke="#000" stroke-width="0.22" letter-spacing="-0.5">In1</text>
<text x="750" y="712.5" font-size="9.2" text-anchor="end" fill="#000" stroke="#000" stroke-width="0.22" letter-spacing="-0.4">Out1</text>
<text x="719" y="739.8" font-size="9.6" text-anchor="middle" fill="#000" stroke="#000" stroke-width="0.22" >If Action</text>
<text x="719" y="752.9" font-size="9.6" text-anchor="middle" fill="#000" stroke="#000" stroke-width="0.22" >Subsystem2</text>
<rect x="634" y="782" width="70" height="36" fill="url(#gr)" stroke="#000" stroke-width="2" filter="url(#sh)" />
<text x="668.5" y="792" font-size="9.2" text-anchor="middle" fill="#000" stroke="#000" stroke-width="0.22" >elseif{ }</text>
<text x="638" y="802.5" font-size="9.2" text-anchor="start" fill="#000" stroke="#000" stroke-width="0.22" letter-spacing="-0.5">In1</text>
<text x="700" y="802.5" font-size="9.2" text-anchor="end" fill="#000" stroke="#000" stroke-width="0.22" letter-spacing="-0.4">Out1</text>
<text x="669" y="829.8" font-size="9.6" text-anchor="middle" fill="#000" stroke="#000" stroke-width="0.22" >If Action</text>
<text x="669" y="842.9" font-size="9.6" text-anchor="middle" fill="#000" stroke="#000" stroke-width="0.22" >Subsystem3</text>
<rect x="834.5" y="606.5" width="60" height="36" fill="#fff" stroke="#000" stroke-width="1" filter="url(#sh)" />
<text x="864.5" y="620" font-size="9.2" text-anchor="middle" fill="#000" stroke="#000" stroke-width="0.22" >num(z)</text>
<path d="M848 625.5H881" stroke="#000" stroke-width="1"/>
<text x="864.5" y="637" font-size="9.2" text-anchor="middle" fill="#000" stroke="#000" stroke-width="0.22" >den(z)</text>
<text x="864.5" y="655" font-size="9.6" text-anchor="middle" fill="#000" stroke="#000" stroke-width="0.22" >Discrete</text>
<text x="864.5" y="668" font-size="9.6" text-anchor="middle" fill="#000" stroke="#000" stroke-width="0.22" >Transfer Fcn1</text>
<rect x="834.5" y="691.5" width="60" height="36" fill="#fff" stroke="#000" stroke-width="1" filter="url(#sh)" />
<text x="864.5" y="705" font-size="9.2" text-anchor="middle" fill="#000" stroke="#000" stroke-width="0.22" >num(z)</text>
<path d="M848 710.5H881" stroke="#000" stroke-width="1"/>
<text x="864.5" y="722" font-size="9.2" text-anchor="middle" fill="#000" stroke="#000" stroke-width="0.22" >den(z)</text>
<text x="864.5" y="740" font-size="9.6" text-anchor="middle" fill="#000" stroke="#000" stroke-width="0.22" >Discrete</text>
<text x="864.5" y="753" font-size="9.6" text-anchor="middle" fill="#000" stroke="#000" stroke-width="0.22" >Transfer Fcn2</text>
<rect x="834.5" y="781.5" width="60" height="36" fill="#fff" stroke="#000" stroke-width="1" filter="url(#sh)" />
<text x="864.5" y="795" font-size="9.2" text-anchor="middle" fill="#000" stroke="#000" stroke-width="0.22" >num(z)</text>
<path d="M848 800.5H881" stroke="#000" stroke-width="1"/>
<text x="864.5" y="812" font-size="9.2" text-anchor="middle" fill="#000" stroke="#000" stroke-width="0.22" >den(z)</text>
<text x="864.5" y="830" font-size="9.6" text-anchor="middle" fill="#000" stroke="#000" stroke-width="0.22" >Discrete</text>
<text x="864.5" y="843" font-size="9.6" text-anchor="middle" fill="#000" stroke="#000" stroke-width="0.22" >Transfer Fcn3</text>
<rect x="739.5" y="781.5" width="60" height="36" fill="#fff" stroke="#000" stroke-width="1" filter="url(#sh)" />
<text x="769.5" y="795" font-size="9.2" text-anchor="middle" fill="#000" stroke="#000" stroke-width="0.22" >num(z)</text>
<path d="M753 800.5H786" stroke="#000" stroke-width="1"/>
<text x="769.5" y="812" font-size="9.2" text-anchor="middle" fill="#000" stroke="#000" stroke-width="0.22" >den(z)</text>
<text x="769.5" y="830" font-size="9.6" text-anchor="middle" fill="#000" stroke="#000" stroke-width="0.22" >Discrete</text>
<text x="769.5" y="843" font-size="9.6" text-anchor="middle" fill="#000" stroke="#000" stroke-width="0.22" >Transfer Fcn4</text>
<path d="M885.5 540.5 L935.5 540.5 L935.5 636.5 L998.5 636.5" fill="none" stroke="#000" stroke-width="1" stroke-linecap="square"/>
<path d="M1003.3 636.5L996.3 632.7L996.3 640.3Z" fill="#000"/>
<path d="M815.5 625.5 L828.5 625.5" fill="none" stroke="#000" stroke-width="1" stroke-linecap="square"/>
<path d="M833.3 625.5L826.3 621.7L826.3 629.3Z" fill="#000"/>
<path d="M895.5 625.5 L921.5 625.5 L921.5 660.5 L994.5 660.5" fill="none" stroke="#000" stroke-width="1" stroke-linecap="square"/>
<path d="M999.3 660.5L992.3 656.7L992.3 664.3Z" fill="#000"/>
<path d="M755.5 710.5 L828.5 710.5" fill="none" stroke="#000" stroke-width="1" stroke-linecap="square"/>
<path d="M833.3 710.5L826.3 706.7L826.3 714.3Z" fill="#000"/>
<path d="M895.5 710.5 L921.5 710.5 L921.5 675.5 L994.5 675.5" fill="none" stroke="#000" stroke-width="1" stroke-linecap="square"/>
<path d="M999.3 675.5L992.3 671.7L992.3 679.3Z" fill="#000"/>
<path d="M705.5 800.5 L733.5 800.5" fill="none" stroke="#000" stroke-width="1" stroke-linecap="square"/>
<path d="M738.3 800.5L731.3 796.7L731.3 804.3Z" fill="#000"/>
<path d="M800.5 800.5 L828.5 800.5" fill="none" stroke="#000" stroke-width="1" stroke-linecap="square"/>
<path d="M833.3 800.5L826.3 796.7L826.3 804.3Z" fill="#000"/>
<path d="M895.5 800.5 L936.5 800.5 L936.5 689.5 L994.5 689.5" fill="none" stroke="#000" stroke-width="1" stroke-linecap="square"/>
<path d="M999.3 689.5L992.3 685.7L992.3 693.3Z" fill="#000"/>
<rect x="969.5" y="814.5" width="30" height="30" fill="#fff" stroke="#000" stroke-width="1" filter="url(#sh)" />
<text x="984.5" y="832.8" font-size="9.6" text-anchor="middle" fill="#000" stroke="#000" stroke-width="0.22" >2</text>
<text x="1002" y="831.9" font-size="9.6" text-anchor="start" fill="#000" stroke="#000" stroke-width="0.22" >Constant</text>
<path d="M984.5 814.5 L984.5 713.5 L990.5 713.5" fill="none" stroke="#000" stroke-width="1" stroke-linecap="square"/>
<path d="M990.5 713.5L996 712" stroke="#000" stroke-width="1"/>
<path d="M1003.5 711.5L996.5 708L996.8 715.2Z" fill="#000"/>
<ellipse cx="1025" cy="674.5" rx="25" ry="65" fill="#fff" stroke="#000" stroke-width="1.1" filter="url(#sh)"/>
<path d="M1005.5 640.5H1010.5M1008 638.0V643.0" stroke="#000" stroke-width="0.9"/>
<path d="M1001.5 661.5H1006.5M1004 659.0V664.0" stroke="#000" stroke-width="0.9"/>
<path d="M1001.5 675.5H1006.5M1004 673.0V678.0" stroke="#000" stroke-width="0.9"/>
<path d="M1001.5 689H1006.5M1004 686.5V691.5" stroke="#000" stroke-width="0.9"/>
<path d="M1005.5 709.5H1010.5M1008 707.0V712.0" stroke="#000" stroke-width="0.9"/>
<path d="M1050.5 675.5 L1073.5 675.5" fill="none" stroke="#000" stroke-width="1" stroke-linecap="square"/>
<path d="M1078.3 675.5L1071.3 671.7L1071.3 679.3Z" fill="#000"/>
<path d="M1079.5 653.5L1124.5 675L1079.5 695.5Z" fill="#fff" stroke="#000" stroke-width="1" filter="url(#sh)"/>
<text x="1093.5" y="678" font-size="9.2" text-anchor="middle" fill="#000" stroke="#000" stroke-width="0.22" >400</text>
<text x="1102" y="707.7" font-size="9.6" text-anchor="middle" fill="#000" stroke="#000" stroke-width="0.22" >Gain</text>
<path d="M1125.5 675.5 L1138.5 675.5" fill="none" stroke="#000" stroke-width="1" stroke-linecap="square"/>
<path d="M1138.5 675.5 L1148.5 675.5" fill="none" stroke="#000" stroke-width="1" stroke-linecap="square"/>
<path d="M1153.3 675.5L1146.3 671.7L1146.3 679.3Z" fill="#000"/>
<circle cx="1138.5" cy="675.5" r="2" fill="#000"/>
<path d="M1138.5 675.5 L1138.5 445.5 L1183.5 445.5" fill="none" stroke="#000" stroke-width="1" stroke-linecap="square"/>
<path d="M1188.3 445.5L1181.3 441.7L1181.3 449.3Z" fill="#000"/>
<rect x="1154.5" y="657.5" width="75" height="34" fill="#fff" stroke="#000" stroke-width="1" filter="url(#sh)" />
<text x="1191" y="678" font-size="9.2" text-anchor="middle" fill="#000" stroke="#000" stroke-width="0.22" >uint16</text>
<text x="1191.5" y="703.7" font-size="9.6" text-anchor="middle" fill="#000" stroke="#000" stroke-width="0.22" >Data Type Conversion</text>
<path d="M1230.5 674.5 L1243.5 674.5" fill="none" stroke="#000" stroke-width="1" stroke-linecap="square"/>
<path d="M1248.3 674.5L1241.3 670.7L1241.3 678.3Z" fill="#000"/>
<rect x="1249.5" y="659.5" width="30" height="30" fill="#fff" stroke="#000" stroke-width="1" filter="url(#sh)" />
<path d="M1264.5 666V684.5M1255 675.5H1274" stroke="#999" stroke-width="1"/>
<path d="M1255 683.5H1259.5L1269 667.5H1274" fill="none" stroke="#000" stroke-width="1.1"/>
<text x="1264.5" y="701.8" font-size="9.6" text-anchor="middle" fill="#000" stroke="#000" stroke-width="0.22" >Saturation</text>
<path d="M1280.5 674.5 L1298.5 674.5" fill="none" stroke="#000" stroke-width="1" stroke-linecap="square"/>
<path d="M1303.3 674.5L1296.3 670.7L1296.3 678.3Z" fill="#000"/>
<rect x="1304.5" y="645.5" width="120" height="58" fill="#fff" stroke="#000" stroke-width="1" filter="url(#sh)" />
<text x="1416.6" y="657.9" font-size="9" text-anchor="end" fill="#0000e0" stroke="#0000e0" stroke-width="0" letter-spacing="0.7">ARDUINO</text>
<path d="M1344.50 679.50 L1345.40 679.21 L1346.30 678.35 L1347.20 677.03 L1348.10 675.35 L1349.00 673.50 L1349.90 671.65 L1350.80 669.97 L1351.70 668.65 L1352.60 667.79 L1353.50 667.50 L1354.40 667.79 L1355.30 668.65 L1356.20 669.97 L1357.10 671.65 L1358.00 673.50 L1358.90 675.35 L1359.80 677.03 L1360.70 678.35 L1361.60 679.21 L1362.50 679.50 L1363.40 679.21 L1364.30 678.35 L1365.20 677.03 L1366.10 675.35 L1367.00 673.50 L1367.90 671.65 L1368.80 669.97 L1369.70 668.65 L1370.60 667.79 L1371.50 667.50 L1372.40 667.79 L1373.30 668.65 L1374.20 669.97 L1375.10 671.65 L1376.00 673.50 L1376.90 675.35 L1377.80 677.03 L1378.70 678.35 L1379.60 679.21 L1380.50 679.50" fill="none" stroke="#000" stroke-width="1.6"/>
<text x="1363" y="698.6" font-size="9.4" text-anchor="middle" fill="#000" stroke="#000" stroke-width="0.22" letter-spacing="0.5">DAC0</text>
<text x="1364.5" y="715.7" font-size="9.6" text-anchor="middle" fill="#000" stroke="#000" stroke-width="0.22" >Analog Output</text>
<rect x="1189.5" y="428.5" width="30" height="32" fill="#fff" stroke="#000" stroke-width="1" filter="url(#sh)" />
<rect x="1193.5" y="433.5" width="22" height="12" fill="none" stroke="#000" stroke-width="1"/>
<text x="1203.6" y="472.8" font-size="9.6" text-anchor="middle" fill="#000" stroke="#000" stroke-width="0.22" >Scope1</text>
<rect x="669" y="539" width="1" height="1" fill="#fff" fill-opacity="1"/>
<rect x="669" y="541" width="1" height="1" fill="#fff" fill-opacity="1"/>
<rect x="669" y="538" width="1" height="1" fill="#fff" fill-opacity="0.75"/>
<rect x="669" y="542" width="1" height="1" fill="#fff" fill-opacity="0.75"/>
<rect x="669" y="537" width="1" height="1" fill="#fff" fill-opacity="0.4"/>
<rect x="669" y="543" width="1" height="1" fill="#fff" fill-opacity="0.4"/>
<rect x="719" y="539" width="1" height="1" fill="#fff" fill-opacity="1"/>
<rect x="719" y="541" width="1" height="1" fill="#fff" fill-opacity="1"/>
<rect x="719" y="538" width="1" height="1" fill="#fff" fill-opacity="0.75"/>
<rect x="719" y="542" width="1" height="1" fill="#fff" fill-opacity="0.75"/>
<rect x="719" y="537" width="1" height="1" fill="#fff" fill-opacity="0.4"/>
<rect x="719" y="543" width="1" height="1" fill="#fff" fill-opacity="0.4"/>
<rect x="779" y="539" width="1" height="1" fill="#fff" fill-opacity="1"/>
<rect x="779" y="541" width="1" height="1" fill="#fff" fill-opacity="1"/>
<rect x="779" y="538" width="1" height="1" fill="#fff" fill-opacity="0.75"/>
<rect x="779" y="542" width="1" height="1" fill="#fff" fill-opacity="0.75"/>
<rect x="779" y="537" width="1" height="1" fill="#fff" fill-opacity="0.4"/>
<rect x="779" y="543" width="1" height="1" fill="#fff" fill-opacity="0.4"/>
<rect x="669" y="624" width="1" height="1" fill="#fff" fill-opacity="1"/>
<rect x="669" y="626" width="1" height="1" fill="#fff" fill-opacity="1"/>
<rect x="669" y="623" width="1" height="1" fill="#fff" fill-opacity="0.75"/>
<rect x="669" y="627" width="1" height="1" fill="#fff" fill-opacity="0.75"/>
<rect x="669" y="622" width="1" height="1" fill="#fff" fill-opacity="0.4"/>
<rect x="669" y="628" width="1" height="1" fill="#fff" fill-opacity="0.4"/>
<rect x="719" y="624" width="1" height="1" fill="#fff" fill-opacity="1"/>
<rect x="719" y="626" width="1" height="1" fill="#fff" fill-opacity="1"/>
<rect x="719" y="623" width="1" height="1" fill="#fff" fill-opacity="0.75"/>
<rect x="719" y="627" width="1" height="1" fill="#fff" fill-opacity="0.75"/>
<rect x="719" y="622" width="1" height="1" fill="#fff" fill-opacity="0.4"/>
<rect x="719" y="628" width="1" height="1" fill="#fff" fill-opacity="0.4"/>
<rect x="669" y="709" width="1" height="1" fill="#fff" fill-opacity="1"/>
<rect x="669" y="711" width="1" height="1" fill="#fff" fill-opacity="1"/>
<rect x="669" y="708" width="1" height="1" fill="#fff" fill-opacity="0.75"/>
<rect x="669" y="712" width="1" height="1" fill="#fff" fill-opacity="0.75"/>
<rect x="669" y="707" width="1" height="1" fill="#fff" fill-opacity="0.4"/>
<rect x="669" y="713" width="1" height="1" fill="#fff" fill-opacity="0.4"/>
</g>
</svg>
</body></html>
